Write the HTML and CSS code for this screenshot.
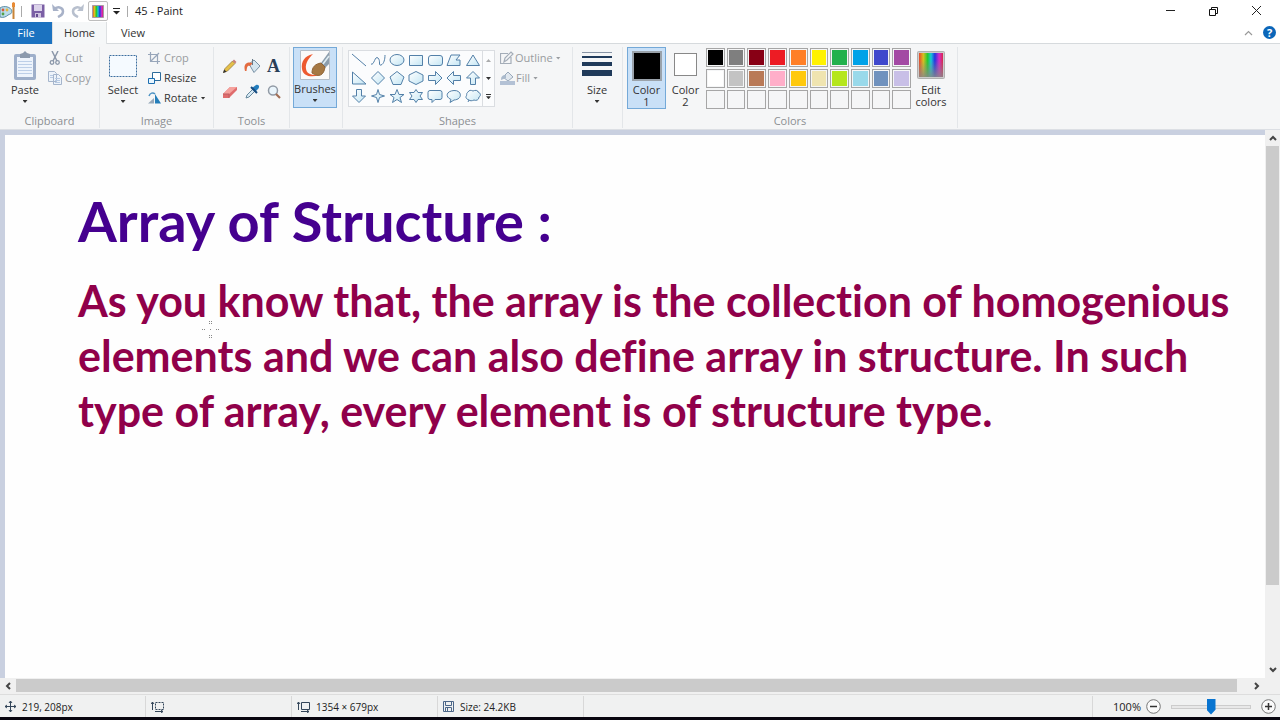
FILE: index.html
```html
<!DOCTYPE html>
<html lang="en">
<head>
<meta charset="utf-8">
<title>45 - Paint</title>
<link rel="stylesheet" href="styles.css">
</head>
<body>
<svg class="defs" aria-hidden="true">
  <defs>
    <linearGradient id="rainbow" x1="0" x2="1" y1="0" y2="0">
      <stop offset="0" stop-color="#e8452c"/><stop offset=".18" stop-color="#d8c020"/><stop offset=".36" stop-color="#22c832"/><stop offset=".5" stop-color="#18c8d8"/><stop offset=".66" stop-color="#2436e0"/><stop offset=".84" stop-color="#d42cc8"/><stop offset="1" stop-color="#d82848"/>
    </linearGradient>
    <linearGradient id="fade" x1="0" x2="0" y1="0" y2="1">
      <stop offset=".3" stop-color="#888" stop-opacity="0"/><stop offset="1" stop-color="#888" stop-opacity=".85"/>
    </linearGradient>
    <linearGradient id="glass" x1="0" x2="1" y1="0" y2="1">
      <stop offset="0" stop-color="#ffffff"/><stop offset="1" stop-color="#c4e6f4"/>
    </linearGradient>
  </defs>
</svg>
<div class="app">
  <header class="titlebar">
    <svg class="logo" width="16" height="18" viewBox="0 0 16 18"><path d="M0 6C4 3 11 5 12 9c0 3-2 3-4 4-2 2-5 3-8 2z" fill="#b9dceb" stroke="#5d8ca4"/><circle cx="3" cy="8" r="1.4" fill="#d85b3c"/><circle cx="7" cy="8" r="1.4" fill="#e3b53a"/><circle cx="3" cy="12" r="1.4" fill="#55a046"/><path d="M13.500 2v15" stroke="#c98538" stroke-width="2"/><path d="M12 5V1l1.500-1L15 1v4z" fill="#e88b35"/></svg>
    <span class="bar"></span>
    <button class="quick" aria-label="Save"><svg width="14" height="14" viewBox="0 0 14 14"><path d="M.5.500h13v13H.5z" fill="#7b5fa5"/><path d="M3 1h8v6H3z" fill="#dcd3ea"/><path d="M4 9h6v5H4z" fill="#cfc3df"/><path d="M5 10h2v3H5z" fill="#65498f"/></svg></button>
    <button class="quick" aria-label="Undo"><svg width="14" height="14" viewBox="0 0 14 14"><path d="M1 0l1 7h6z" fill="#a8b2c8"/><path d="M3 5.500C6 2 12 3 12 7.500c0 3-2 4-5 5.500" fill="none" stroke="#a8b2c8" stroke-width="2.500"/></svg></button>
    <button class="quick" aria-label="Redo"><svg width="14" height="14" viewBox="0 0 14 14"><path d="M13 0l-1 7H6z" fill="#b8c0ce"/><path d="M11 5.500C8 2 2 3 2 7.500c0 3 2 4 5 5.500" fill="none" stroke="#b8c0ce" stroke-width="2.500"/></svg></button>
    <button class="quick boxed" aria-label="Edit colors"><svg width="12" height="13" viewBox="0 0 12 13"><path d="M.5.500h11v12H.5z" fill="url(#rainbow)" stroke="#a59aa5"/></svg></button>
    <button class="quick narrow" aria-label="Customize toolbar"><svg width="7" height="7" viewBox="0 0 7 7"><path d="M0 .5h7" stroke="#222"/><path d="M0 3h7L3.500 6.500z" fill="#222"/></svg></button>
    <span class="bar"></span>
    <h1 class="title">45 - Paint</h1>
    <div class="window-buttons">
      <button aria-label="Minimize"><svg width="11" height="11" viewBox="0 0 11 11"><path d="M1 4.500h9" stroke="#222"/></svg></button>
      <button aria-label="Restore"><svg width="11" height="11" viewBox="0 0 11 11"><path d="M1.500 3.500h6v6h-6zM3.500 3V1.500h6v6H8" fill="none" stroke="#111"/></svg></button>
      <button aria-label="Close"><svg width="11" height="11" viewBox="0 0 11 11"><path d="M1 0l9 9M10 0l-9 9" stroke="#222"/></svg></button>
    </div>
  </header>
  <nav class="tabs">
    <button class="tab file">File</button>
    <button class="tab home">Home</button>
    <button class="tab view">View</button>
    <div class="tab-tools">
      <button aria-label="Collapse ribbon"><svg width="9" height="6" viewBox="0 0 9 6"><path d="M1 5l3.500-3.500L8 5" fill="none" stroke="#999" stroke-width="1.200"/></svg></button>
      <button class="help" aria-label="Help">?</button>
    </div>
  </nav>
  <section class="ribbon">
    <div class="group clipboard">
      <div class="tools">
        <button class="big"><svg width="24" height="30" viewBox="0 0 24 30"><rect x="1" y="3" width="22" height="26" rx="2" fill="#9eafca"/><path d="M4 6h16v20H4z" fill="#eef4fc"/><path d="M5 10.500h14M5 13.500h14M5 16.500h14M5 19.500h14M5 22.500h14" stroke="#bdcfe8"/><path d="M7 7V3l3-1 2-2 2 2 3 1v4z" fill="#8c9aad"/></svg><span>Paste</span><i class="caret"></i></button>
        <div class="stack">
          <button class="line off"><svg width="14" height="14" viewBox="0 0 14 14"><path d="M4 0l5 10M10 0L5 10" stroke="#8c98aa" stroke-width="1.500"/><circle cx="4" cy="11.500" r="1.800" fill="none" stroke="#8c98aa" stroke-width="1.300"/><circle cx="9.500" cy="11.500" r="1.800" fill="none" stroke="#8c98aa" stroke-width="1.300"/></svg>Cut</button>
          <button class="line off"><svg width="14" height="14" viewBox="0 0 14 14"><path d="M.5.500h6l2 2v8h-8zM5.500 3.500h5l3 3v7h-8z" fill="#edf3fa" stroke="#a5b5cc"/><path d="M2 4.500h3M2 6.500h3M7 7.500h5M7 9.500h5M7 11.500h5" stroke="#b7cae3"/></svg>Copy</button>
        </div>
      </div>
      <div class="caption">Clipboard</div>
    </div>
    <div class="group image">
      <div class="tools">
        <button class="big"><svg width="30" height="30" viewBox="0 0 30 30"><path d="M1.500 4.500h27v21h-27z" fill="#f5faff" stroke="#3c6e9f" stroke-dasharray="2 1"/></svg><span>Select</span><i class="caret"></i></button>
        <div class="stack">
          <button class="line off"><svg width="13" height="12" viewBox="0 0 13 12"><path d="M2.500 0v9.500H12M0 2.500h9.500V12M3 9l8-8" fill="none" stroke="#98a6ba" stroke-width="1.200"/></svg>Crop</button>
          <button class="line"><svg width="13" height="12" viewBox="0 0 13 12"><path d="M4.500.500h8v8h-8z" fill="#fff" stroke="#2e6c9b"/><path d="M.5 6.500h6v5h-6z" fill="#e8f6ff" stroke="#1c6eb0"/></svg>Resize</button>
          <button class="line"><svg width="13" height="12" viewBox="0 0 13 12"><path d="M0 11.500h6V6z" fill="#98a9ba"/><path d="M7 2l6 9.500H7z" fill="#257eba"/><path d="M1 4c1-3 4-4 6-2" fill="none" stroke="#4d92c3" stroke-width="1.500"/></svg>Rotate<i class="caret"></i></button>
        </div>
      </div>
      <div class="caption">Image</div>
    </div>
    <div class="group toolset">
      <div class="tools grid">
        <button aria-label="Pencil"><svg width="16" height="16" viewBox="0 0 16 16"><path d="M1.500 14.500l1.500-4 7.500-7.500 2.500 2.500-7.500 7.500z" fill="#e5c048" stroke="#8b713c" stroke-width=".7"/><path d="M10.500 3l1.500-1.500 2.500 2.500L13 5.500z" fill="#c9807a"/><path d="M1 15l1.200-3.500 2.300 2.300z" fill="#333"/></svg></button>
        <button aria-label="Fill"><svg width="16" height="16" viewBox="0 0 16 16"><path d="M5 6l5-4 6 6-6 6.500z" fill="#d6e6f0" stroke="#7891a5"/><path d="M1 13C-1 6 3 3 9 5L6 8C3 7 3 10 2.500 13z" fill="#e36b40"/><path d="M8.500 7V1" stroke="#687987"/></svg></button>
        <button class="letter" aria-label="Text">A</button>
        <button aria-label="Eraser"><svg width="16" height="16" viewBox="0 0 16 16"><path d="M1 10l7-7h7v3l-8 8H1z" fill="#df6c6d"/><path d="M1 10l7-7h7l-8 7z" fill="#f5a29d"/><path d="M1 10h6v4" fill="none" stroke="#bd5e63"/></svg></button>
        <button aria-label="Color picker"><svg width="16" height="16" viewBox="0 0 16 16"><path d="M2 14l1-3 6-6 2 2-6 6z" fill="#d8eaf5" stroke="#65879c"/><path d="M8 4l4-3c3-1 4 2 2 4l-3 3z" fill="#237dbd"/><path d="M7 3l6 6" stroke="#174d82" stroke-width="2"/></svg></button>
        <button aria-label="Magnifier"><svg width="16" height="16" viewBox="0 0 16 16"><circle cx="7" cy="6.500" r="4.500" fill="#eaf5fc" stroke="#919aa5" stroke-width="1.500"/><path d="M10 10l4 4" stroke="#a26e55" stroke-width="2.200"/></svg></button>
      </div>
      <div class="caption">Tools</div>
    </div>
    <div class="group brushes">
      <button class="big chosen"><svg width="32" height="32" viewBox="0 0 32 32"><path d="M1.500 1.500h29v29h-29z" fill="#fafafa" stroke="#b5bec8"/><path d="M14 5C5 7 2 13 3 20c1 7 9 9 17 6-6 0-12 0-13-6-1-6 3-11 7-15z" fill="#ed5a30"/><path d="M22 14l8-11v12l-4 4z" fill="#8d9ead"/><path d="M24 15l6-8" stroke="#dfedf2" stroke-width="1.500"/><path d="M13 24c0-6 3-9 9-10l4 4c-1 8-6 11-13 6z" fill="#a57843" stroke="#8f6335"/></svg><span>Brushes</span><i class="caret"></i></button>
    </div>
    <div class="group shapes">
      <div class="tools">
        <div class="gallery">
          <div class="shape-grid">
            <button aria-label="Line"><svg viewBox="0 0 16 14"><path d="M1 1l14 12"/></svg></button>
            <button aria-label="Curve"><svg viewBox="0 0 16 14"><path d="M1 11C4 13 5 2 8 5s0 8 3 7 4-6 4-10" fill="none"/></svg></button>
            <button aria-label="Oval"><svg viewBox="0 0 16 14"><ellipse cx="8" cy="7" rx="7" ry="5.500"/></svg></button>
            <button aria-label="Rectangle"><svg viewBox="0 0 16 14"><path d="M1.500 2.500h13v10h-13z"/></svg></button>
            <button aria-label="Rounded rectangle"><svg viewBox="0 0 16 14"><rect x="1.500" y="2.500" width="14" height="10" rx="2.500"/></svg></button>
            <button aria-label="Polygon"><svg viewBox="0 0 16 14"><path d="M1 12.500L5 2h9l-4 5h4v5.500z"/></svg></button>
            <button aria-label="Triangle"><svg viewBox="0 0 16 14"><path d="M8 2l6.500 10.500h-13z"/></svg></button>
            <button aria-label="Right triangle"><svg viewBox="0 0 16 14"><path d="M1.500 1v12H15z"/></svg></button>
            <button aria-label="Diamond"><svg viewBox="0 0 16 14"><path d="M8 .5L14.500 7 8 13.500 1.500 7z"/></svg></button>
            <button aria-label="Pentagon"><svg viewBox="0 0 16 14"><path d="M8 .5l7 5.500-3 7.500H4L1 6z"/></svg></button>
            <button aria-label="Hexagon"><svg viewBox="0 0 16 14"><path d="M8 .5l7 3.500v6l-7 3.500L1 10V4z"/></svg></button>
            <button aria-label="Right arrow"><svg viewBox="0 0 16 14"><path d="M1.500 4.500h7v-4L15 7l-6.500 6.500v-4h-7z"/></svg></button>
            <button aria-label="Left arrow"><svg viewBox="0 0 16 14"><path d="M14.500 4.500h-7v-4L1 7l6.500 6.500v-4h7z"/></svg></button>
            <button aria-label="Up arrow"><svg viewBox="0 0 16 14"><path d="M8 .5L14.500 7h-4v6.500h-5V7h-4z"/></svg></button>
            <button aria-label="Down arrow"><svg viewBox="0 0 16 14"><path d="M8 13.500L14.500 7h-4V.5h-5V7h-4z"/></svg></button>
            <button aria-label="Four point star"><svg viewBox="0 0 16 14"><path d="M8 .5l1.500 5 5 1.500-5 1.500-1.500 5-1.500-5-5-1.500 5-1.500z"/></svg></button>
            <button aria-label="Five point star"><svg viewBox="0 0 16 14"><path d="M8 .5l2 5h5l-4 3 1.500 5L8 10.500l-4.500 3 1.500-5-4-3h5z"/></svg></button>
            <button aria-label="Six point star"><svg viewBox="0 0 16 14"><path d="M8 .5l2 3h4.500L12 7l2.500 3.500H10l-2 3-2-3H1.500L4 7 1.500 3.500H6z"/></svg></button>
            <button aria-label="Rounded callout"><svg viewBox="0 0 16 14"><path d="M3 1.500h10q2 0 2 2v5q0 2-2 2H8l-3 3v-3H3q-2 0-2-2v-5q0-2 2-2z"/></svg></button>
            <button aria-label="Oval callout"><svg viewBox="0 0 16 14"><path d="M4 13.500l1-3C-1 8 0 2 8 1.500s9 9 0 9.500z"/></svg></button>
            <button aria-label="Cloud callout"><svg viewBox="0 0 16 14"><path d="M3 3c1-2 3-2 5-1 2-1 5-1 5 1 3 1 3 4 1 5 0 3-3 4-5 3-2 1-4 1-5 0C1 10 0 8 2 6 1 5 2 4 3 3zM4 11l-1 2"/></svg></button>
          </div>
          <div class="gallery-scroll">
            <button aria-label="Scroll shapes up"><i class="caret up"></i></button>
            <button aria-label="Scroll shapes down"><i class="caret"></i></button>
            <button aria-label="More shapes" class="more"><i class="caret"></i></button>
          </div>
        </div>
        <div class="stack">
          <button class="line off"><svg width="14" height="14" viewBox="0 0 14 14"><path d="M11 6v6.500H.5v-10H8M4 11l1-4 6-6 2 2-6 6z" fill="none" stroke="#a4adb8" stroke-width="1.200"/></svg>Outline<i class="caret"></i></button>
          <button class="line off"><svg width="15" height="14" viewBox="0 0 15 14"><path d="M3 6l5-5 5 5-5 4z" fill="#e0e7ee" stroke="#98a8ba"/><path d="M1 9c0-3 1-5 5-5v3z" fill="#aabacc"/><path d="M0 10h15v4H0z" fill="#b3c1d5"/></svg>Fill<i class="caret"></i></button>
        </div>
      </div>
      <div class="caption">Shapes</div>
    </div>
    <div class="group size">
      <button class="big"><svg width="30" height="30" viewBox="0 0 30 30"><path d="M0 1.500h30" stroke="#8894a5"/><path d="M0 6h30" stroke="#203a5a" stroke-width="2"/><path d="M0 13h30" stroke="#203a5a" stroke-width="4"/><path d="M0 22h30" stroke="#203a5a" stroke-width="6"/></svg><span>Size</span><i class="caret"></i></button>
    </div>
    <div class="group colors">
      <div class="tools">
        <button class="big chosen color-one"><b class="sample"></b><span>Color<br>1</span></button>
        <button class="big color-two"><b class="sample"></b><span>Color<br>2</span></button>
        <div class="palette">
          <button class="black" aria-label="Black"></button><button class="gray" aria-label="Gray"></button><button class="maroon" aria-label="Dark red"></button><button class="red" aria-label="Red"></button><button class="orange" aria-label="Orange"></button><button class="yellow" aria-label="Yellow"></button><button class="green" aria-label="Green"></button><button class="turquoise" aria-label="Turquoise"></button><button class="indigo" aria-label="Indigo"></button><button class="purple" aria-label="Purple"></button>
          <button class="white" aria-label="White"></button><button class="silver" aria-label="Light gray"></button><button class="brown" aria-label="Brown"></button><button class="rose" aria-label="Rose"></button><button class="gold" aria-label="Gold"></button><button class="cream" aria-label="Light yellow"></button><button class="lime" aria-label="Lime"></button><button class="sky" aria-label="Light turquoise"></button><button class="steel" aria-label="Blue gray"></button><button class="lavender" aria-label="Lavender"></button>
          <button aria-label="Custom 1"></button><button aria-label="Custom 2"></button><button aria-label="Custom 3"></button><button aria-label="Custom 4"></button><button aria-label="Custom 5"></button><button aria-label="Custom 6"></button><button aria-label="Custom 7"></button><button aria-label="Custom 8"></button><button aria-label="Custom 9"></button><button aria-label="Custom 10"></button>
        </div>
        <button class="big edit"><svg width="28" height="28" viewBox="0 0 28 28"><rect x=".5" y=".5" width="27" height="27" rx="1" fill="#ccc" stroke="#b0b0b0"/><path d="M2 2h24v24H2z" fill="url(#rainbow)"/><path d="M2 2h24v24H2z" fill="url(#fade)"/></svg><span>Edit<br>colors</span></button>
      </div>
      <div class="caption">Colors</div>
    </div>
  </section>
  <main class="work">
    <div class="canvas">
      <h2>Array of Structure :</h2>
      <p>As you know that, the array is the collection of homogenious<br>elements and we can also define array in structure. In such<br>type of array, every element is of structure type.</p>
      <svg class="cursor" width="19" height="19" viewBox="0 0 19 19"><path d="M1 9.500h3M15 9.500h3M9 9.500h1M8 1.500h3M8 3.500h3M8 15.500h3M8 17.500h3" stroke="#888" stroke-dasharray="1 1"/></svg>
    </div>
    <div class="scroll vertical">
      <button aria-label="Scroll up"><svg width="8" height="6" viewBox="0 0 8 6"><path d="M1 5l3-3 3 3" fill="none" stroke="#444" stroke-width="2"/></svg></button>
      <div class="track"><div class="thumb"></div></div>
      <button aria-label="Scroll down"><svg width="8" height="6" viewBox="0 0 8 6"><path d="M1 1l3 3 3-3" fill="none" stroke="#444" stroke-width="2"/></svg></button>
    </div>
  </main>
  <div class="scroll horizontal">
    <button aria-label="Scroll left"><svg width="6" height="8" viewBox="0 0 6 8"><path d="M5 1L2 4l3 3" fill="none" stroke="#444" stroke-width="2"/></svg></button>
    <div class="track"><div class="thumb"></div></div>
    <button aria-label="Scroll right"><svg width="6" height="8" viewBox="0 0 6 8"><path d="M1 1l3 3-3 3" fill="none" stroke="#444" stroke-width="2"/></svg></button>
  </div>
  <footer class="status">
    <div class="cell"><svg width="11" height="11" viewBox="0 0 11 11"><path d="M5.500 0v11M0 5.500h11M4 2l1.500-2L7 2M4 9l1.500 2L7 9M2 4L0 5.500 2 7M9 4l2 1.500L9 7" fill="none" stroke="#34465a"/></svg>219, 208px</div>
    <div class="cell"><svg width="13" height="12" viewBox="0 0 13 12"><path d="M4.500 1.500h8v7h-8z" fill="none" stroke="#34465a" stroke-dasharray="2 1"/><path d="M1.500 9V1M0 3l1.500-2L3 3M4 10.500h8M10 9l2 1.500L10 12" fill="none" stroke="#34465a"/></svg></div>
    <div class="cell"><svg width="13" height="12" viewBox="0 0 13 12"><path d="M4.500 1.500h8v7h-8zM1.500 9V1M0 3l1.500-2L3 3M4 10.500h8M10 9l2 1.500L10 12" fill="none" stroke="#34465a"/></svg>1354 × 679px</div>
    <div class="cell"><svg width="11" height="11" viewBox="0 0 11 11"><path d="M.5.500h10v10H.5zM2.500.500v4h6v-4M2.500 10.500v-4h6v4M4.500 7v3" fill="none" stroke="#4c6688"/></svg>Size: 24.2KB</div>
    <div class="zoom">
      <label for="zoom">100%</label>
      <button aria-label="Zoom out"><svg width="15" height="15" viewBox="0 0 15 15"><circle cx="7.500" cy="7.500" r="6.800" fill="#fafafa" stroke="#777"/><path d="M4 7.500h7" stroke="#333" stroke-width="1.500"/></svg></button>
      <input id="zoom" type="range" min="0" max="100" value="50">
      <button aria-label="Zoom in"><svg width="15" height="15" viewBox="0 0 15 15"><circle cx="7.500" cy="7.500" r="6.800" fill="#fafafa" stroke="#777"/><path d="M4 7.500h7M7.500 4v7" stroke="#333" stroke-width="1.500"/></svg></button>
    </div>
  </footer>
</div>
</body>
</html>
```
FILE: styles.css
```css
* { box-sizing: border-box; }
body { margin: 0; font: 11px/14px "Open Sans", "Noto Sans", sans-serif; color: #333; }
button { font: inherit; color: inherit; background: none; border: 0; padding: 0; margin: 0; display: flex; align-items: center; justify-content: center; }
svg { display: block; flex: none; }
.defs { position: absolute; width: 0; height: 0; }
.app { min-height: 100vh; display: flex; flex-direction: column; border-bottom: 3px solid #08050f; background: #fff; }

.titlebar { display: flex; align-items: center; height: 22px; }
.logo { margin-right: 2px; }
.bar { width: 1px; height: 11px; background: #aaa; margin: 0 3px; }
.quick { width: 20px; height: 20px; }
.titlebar .bar + .quick { margin-left: 3px; }
.boxed { border: 1px solid #bdbdbd; border-radius: 2px; background: #fcfcfc; }
.narrow { width: 16px; }
.title { font-size: 11px; line-height: 14px; font-weight: 400; margin: 0 0 0 4px; color: #222; }
.window-buttons { display: flex; margin-left: auto; padding-right: 2px; }
.window-buttons button { width: 43px; height: 20px; }

.tabs { display: flex; height: 22px; border-bottom: 1px solid #d6dadd; }
.tab { height: 22px; width: 52px; }
.file { background: #1b72c0; color: #fff; }
.home { background: #f5f7f8; border: 1px solid #dde0e2; border-width: 0 1px; width: 55px; }
.tab-tools { display: flex; align-items: center; gap: 10px; margin-left: auto; padding-right: 4px; }
.help { width: 13px; height: 13px; border-radius: 50%; background: #0b66b9; color: #fff; font-weight: 700; }

.ribbon { display: flex; background: #f5f6f7; height: 86px; border-bottom: 1px solid #dcdfe4; padding: 3px 0 1px; }
.group { display: flex; flex-direction: column; border-right: 1px solid #e3e6e9; }
.clipboard { width: 100px; }
.image { width: 114px; }
.toolset { width: 76px; }
.brushes { width: 53px; padding-left: 3px; }
.shapes { width: 230px; }
.size { width: 50px; padding-left: 2px; }
.colors { width: 335px; }
.tools { display: flex; flex: 1; }
.caption { text-align: center; color: #8c8f93; line-height: 15px; }
.big { flex-direction: column; justify-content: flex-start; width: 44px; height: 62px; padding-top: 4px; line-height: 12px; }
.big > svg, .sample { margin-bottom: 3px; }
.big .caret { margin-top: 4px; }
.caret { width: 5px; height: 3px; background: currentColor; clip-path: polygon(0 0, 100% 0, 50% 100%); }
.caret.up { transform: rotate(180deg); opacity: .4; }
.stack { display: flex; flex-direction: column; padding-top: 1px; }
.line { height: 20px; gap: 3px; justify-content: flex-start; }
.off { color: #999ca0; }
.clipboard .tools { padding-left: 3px; gap: 1px; }
.image .tools { padding-left: 1px; gap: 3px; }
.chosen { background: #c9e0f7; border: 1px solid #74a9d8; }
.brushes .chosen { padding-top: 1px; height: 61px; }
.brushes .chosen > svg { margin-bottom: 2px; }

.grid { display: grid; grid-template-columns: repeat(3, 22px); grid-template-rows: 26px 26px; justify-content: center; padding-top: 6px; }
.letter { font: 700 18px/20px "Liberation Serif", serif; color: #293e56; }

.shapes .tools { gap: 5px; padding-left: 5px; }
.shapes .line { gap: 1px; }
.shapes .line .caret { margin-left: 2px; }
.gallery { display: flex; width: 147px; height: 57px; margin-top: 3px; border: 1px solid #dadde1; background: #fbfcfd; }
.shape-grid { display: grid; grid-template-columns: repeat(7, 19px); grid-template-rows: repeat(3, 18px); }
.shape-grid svg { width: 16px; height: 14px; fill: url(#glass); stroke: #5380a8; stroke-width: 1; }
.gallery-scroll { flex: 1; display: grid; grid-template-rows: repeat(3, 1fr); border-left: 1px solid #dadde1; }
.more { flex-direction: column; gap: 1px; }
.more::before { content: ""; width: 5px; height: 1px; background: #333; }

.colors .tools { padding-left: 4px; }
.color-one, .color-two { width: 39px; }
.color-one { padding-top: 3px; }
.color-two { padding-top: 6px; }
.sample { display: block; width: 30px; height: 30px; background: #000; border: 2px solid #9aa2aa; }
.color-one .sample { margin-bottom: 3px; }
.color-two .sample { width: 23px; height: 23px; background: #fff; border: 1px solid #888; margin: 0 0 8px; }
.palette { display: grid; grid-template-columns: repeat(10, 1fr); grid-template-rows: repeat(3, 19px); gap: 2px; width: 205px; margin: 1px 0 0 1px; }
.palette button { border: 1px solid #a6a6a6; padding: 1px; background-color: #f5f6f7; background-clip: content-box; }
.palette .black { background-color: #000; } .palette .gray { background-color: #7f7f7f; } .palette .maroon { background-color: #880015; } .palette .red { background-color: #ed1c24; } .palette .orange { background-color: #ff7f27; }
.palette .yellow { background-color: #fff200; } .palette .green { background-color: #22b14c; } .palette .turquoise { background-color: #00a2e8; } .palette .indigo { background-color: #3f48cc; } .palette .purple { background-color: #a349a4; }
.palette .white { background-color: #fff; } .palette .silver { background-color: #c3c3c3; } .palette .brown { background-color: #b97a57; } .palette .rose { background-color: #ffaec9; } .palette .gold { background-color: #ffc90e; }
.palette .cream { background-color: #efe4b0; } .palette .lime { background-color: #b5e61d; } .palette .sky { background-color: #99d9ea; } .palette .steel { background-color: #7092be; } .palette .lavender { background-color: #c8bfe7; }
.edit { width: 40px; }
.edit > svg { margin-bottom: 5px; }

.work { flex: 1; display: flex; background: #c9d0e0; }
.canvas { flex: 1; position: relative; margin: 5px 0 0 5px; padding: 54px 0 0 73px; background: #fefefe; font-family: Lato, sans-serif; font-weight: 700; font-variant-ligatures: none; }
.canvas h2 { margin: 0; font-size: 56px; line-height: 64px; color: #45008f; }
.canvas p { margin: 20px 0 0; font-size: 43px; line-height: 55px; color: #90004a; white-space: nowrap; }
.cursor { position: absolute; left: 196px; top: 185px; }

.scroll { display: flex; background: #f0f0f0; }
.scroll button { width: 15px; height: 16px; }
.track { flex: 1; display: flex; }
.thumb { background: #cbcbcb; }
.vertical { flex-direction: column; width: 15px; }
.vertical .track { flex-direction: column; padding: 0 1px; }
.vertical .thumb { height: 85%; }
.horizontal { height: 17px; padding: 1px 15px 2px 0; border-bottom: 1px solid #ddd; }
.horizontal button { height: 14px; width: 16px; }
.horizontal .thumb { width: 99%; }

.status { display: flex; height: 22px; background: #f0f1f1; color: #222; font-size: 10px; padding-top: 1px; }
.cell { display: flex; align-items: center; gap: 6px; width: 146px; padding-left: 5px; border-right: 1px solid #d8d8d8; }
.zoom { display: flex; align-items: center; margin-left: auto; padding: 0 4px 0 20px; gap: 5px; border-left: 1px solid #d8d8d8; }
.zoom label { font-size: 11px; }
.zoom input { appearance: none; width: 90px; height: 16px; margin: 0; padding: 0 5px; background: transparent; }
.zoom input::-webkit-slider-runnable-track { height: 4px; border: 1px solid #ccc; background: #e8e8e8; }
.zoom input::-webkit-slider-thumb { appearance: none; width: 9px; height: 16px; margin-top: -7px; background: #0874d0; clip-path: polygon(0 0, 100% 0, 100% 70%, 50% 100%, 0 70%); }
```
